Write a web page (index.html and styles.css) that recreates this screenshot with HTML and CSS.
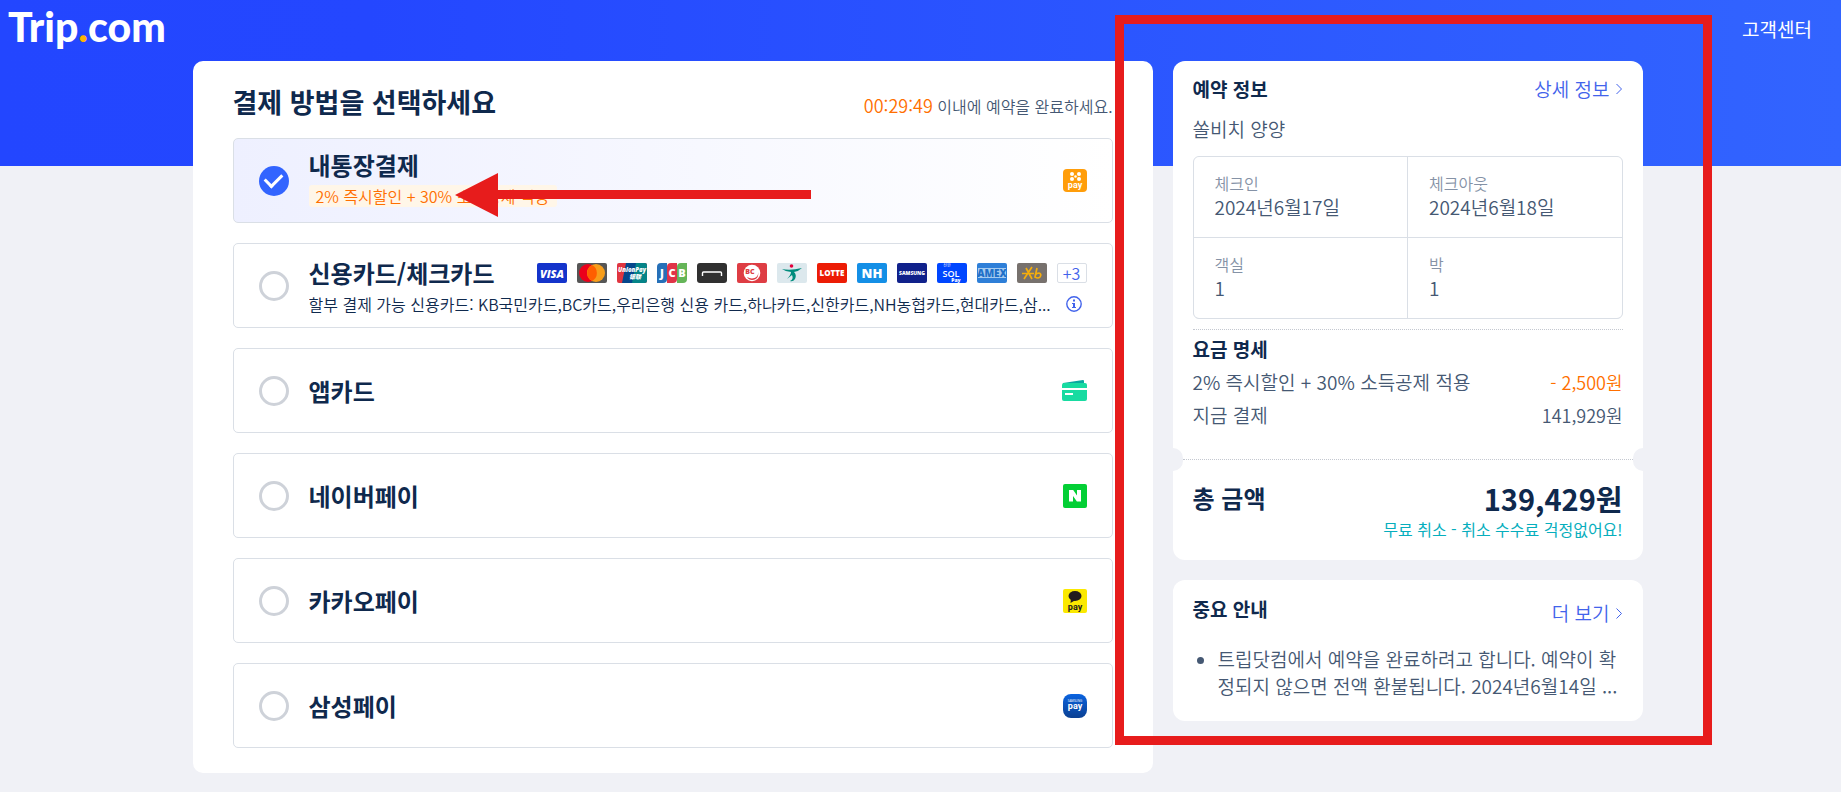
FILE: index.html
```html
<!DOCTYPE html>
<html lang="ko">
<head>
<meta charset="utf-8">
<meta name="viewport" content="width=device-width, initial-scale=1">
<title>Trip.com 결제</title>
<link rel="stylesheet" href="styles.css">
</head>
<body>
<header class="topbar">
  <a class="logo" href="#">Trip<span class="logo-dot">.</span>com</a>
  <a class="support" href="#">고객센터</a>
</header>

<div class="layout">
  <main class="panel payment">
    <div class="payment-head">
      <h1>결제 방법을 선택하세요</h1>
      <p class="timer"><time>00:29:49</time> 이내에 예약을 완료하세요.</p>
    </div>
    <div class="methods">
      <label class="method method-selected">
        <input type="radio" name="pay" checked>
        <span class="method-body">
          <span class="method-name">내통장결제</span>
          <span class="promo">2% 즉시할인 + 30% 소득공제 적용</span>
        </span>
        <svg class="brand" viewBox="0 0 24 24">
          <rect width="24" height="23" rx="4" fill="#ff9d0a"/>
          <g fill="#fff"><circle cx="9" cy="5" r="2"/><circle cx="16" cy="5" r="2"/><circle cx="9" cy="10" r="2"/><circle cx="16" cy="10" r="2"/><circle cx="12.500" cy="7.500" r="1.300"/></g>
          <text x="12" y="19" class="pay-text" fill="#fff">pay</text>
        </svg>
      </label>

      <label class="method">
        <input type="radio" name="pay">
        <span class="method-body">
          <span class="method-line">
            <span class="method-name">신용카드/체크카드</span>
            <span class="cards">
              <svg viewBox="0 0 30 20"><rect width="30" height="20" rx="2" fill="#1434cb"/><text x="15" y="15" class="mark visa">VISA</text></svg>
              <svg viewBox="0 0 30 20"><rect width="30" height="20" rx="2" fill="#565656"/><circle cx="11" cy="10" r="9" fill="#eb001b"/><circle cx="19" cy="10" r="9" fill="#f79e1b"/><path d="M15 2a9 9 0 0 1 0 16 9 9 0 0 1 0-16z" fill="#ff5f00"/></svg>
              <svg viewBox="0 0 30 20"><rect width="30" height="20" rx="2" fill="#e03540"/><path d="M9 0h15l-4 20H5z" fill="#06478c"/><path d="M19 0h9a2 2 0 0 1 2 2v16a2 2 0 0 1-2 2H15z" fill="#058488"/><text x="15" y="9" class="mark union">UnionPay</text><text x="18" y="16" class="mark union">银联</text></svg>
              <svg viewBox="0 0 30 20"><path d="M4 0h6v16a4 4 0 0 1-4 4H0V4a4 4 0 0 1 4-4z" fill="#2670b8"/><path d="M14 0h6v16a4 4 0 0 1-4 4h-6V4a4 4 0 0 1 4-4z" fill="#e03448"/><path d="M24 0h6v16a4 4 0 0 1-4 4h-6V4a4 4 0 0 1 4-4z" fill="#65b558"/><text class="mark jcb" y="14"><tspan x="5">J</tspan><tspan x="15">C</tspan><tspan x="25">B</tspan></text></svg>
              <svg viewBox="0 0 30 20"><rect width="30" height="20" rx="3" fill="#303030"/><path d="M5.500 13v-3q0-1 1-1h17q1 0 1 1v3" fill="none" stroke="#fff" stroke-width="1.400"/></svg>
              <svg viewBox="0 0 30 20"><rect width="30" height="20" rx="2" fill="#de3d44"/><circle cx="15" cy="10" r="8.300" fill="#fff"/><path d="M15 17c5 0 7-4 6-8 1 6-6 8-11 5 1 2 3 3 5 3z" fill="#de3d44"/><text x="13" y="11" class="mark bc">BC</text></svg>
              <svg viewBox="0 0 30 20"><rect width="30" height="20" rx="2" fill="#dce8ed"/><circle cx="14.500" cy="3" r="1.800" fill="#e5003c"/><path d="M5 6q8 2 20-1-3 3-8 4 3 3 1 7-2 3-5 2 4-2 2-6l-5 4q4-4 4-7-5 0-9-3z" fill="#008c7d"/></svg>
              <svg viewBox="0 0 30 20"><rect width="30" height="20" rx="2" fill="#ec1c05"/><text x="15" y="13" class="mark lotte">LOTTE</text></svg>
              <svg viewBox="0 0 30 20"><rect width="30" height="20" rx="2" fill="#148fe6"/><text x="15" y="15" class="mark nh">NH</text></svg>
              <svg viewBox="0 0 30 20"><rect width="30" height="20" rx="2" fill="#10218b"/><text x="15" y="12" class="mark samsung">SAMSUNG</text></svg>
              <svg viewBox="0 0 30 20"><rect width="30" height="20" rx="2" fill="#0046ff"/><text x="10" y="4" class="mark tiny">신한</text><text x="14" y="14" class="mark sol">SOL</text><text x="19" y="19" class="mark solpay">Pay</text></svg>
              <svg viewBox="0 0 30 20"><rect width="30" height="20" rx="2" fill="#2e7fd8"/><rect x="1" y="5" width="28" height="10" fill="#a5cbf0"/><text x="15" y="14" class="mark amex">AMEX</text></svg>
              <svg viewBox="0 0 30 20"><rect width="30" height="20" rx="2" fill="#77716d"/><path d="M5 10.500h12M9 5l6 11M15 4L7 16M20 5l-2 9q3 2 5 0 2-3-1-4-2 0-4 2" fill="none" stroke="#f6ae0b" stroke-width="1.700"/></svg>
              <span class="more-cards">+3</span>
            </span>
          </span>
          <span class="method-line">
            <span class="installment">할부 결제 가능 신용카드: KB국민카드,BC카드,우리은행 신용 카드,하나카드,신한카드,NH농협카드,현대카드,삼...</span>
            <button class="info" type="button" aria-label="할부 안내"><svg viewBox="0 0 18 18"><circle cx="9" cy="9" r="7.200" fill="none" stroke="#4263eb" stroke-width="1.400"/><path d="M8 4.500h2v2H8zM7 8h3v4h1v1H7v-1h1V9H7z" fill="#4263eb"/></svg></button>
          </span>
        </span>
      </label>

      <label class="method">
        <input type="radio" name="pay">
        <span class="method-body"><span class="method-name">앱카드</span></span>
        <svg class="brand brand-wide" viewBox="0 0 25 24"><path d="M1 4l20-3q1 0 1 1v3H1z" fill="#0aa89f"/><rect y="4" width="25" height="18" rx="2" fill="#18dba1"/><path d="M0 9h25v2H0zM3 14h8v2H3z" fill="#fff"/></svg>
      </label>

      <label class="method">
        <input type="radio" name="pay">
        <span class="method-body"><span class="method-name">네이버페이</span></span>
        <svg class="brand" viewBox="0 0 24 24"><rect width="24" height="24" rx="2" fill="#03cf35"/><path d="M6 6h4.200l3.800 5.500V6h4v11.500h-4.100L10 12v5.500H6z" fill="#fff"/></svg>
      </label>

      <label class="method">
        <input type="radio" name="pay">
        <span class="method-body"><span class="method-name">카카오페이</span></span>
        <svg class="brand" viewBox="0 0 24 24"><rect width="24" height="24" rx="2" fill="#fbe900"/><ellipse cx="12" cy="7" rx="6.500" ry="5" fill="#231c1d"/><path d="M8 9l-.500 5 5-3z" fill="#231c1d"/><text x="12" y="21" class="pay-text" fill="#231c1d">pay</text></svg>
      </label>

      <label class="method">
        <input type="radio" name="pay">
        <span class="method-body"><span class="method-name">삼성페이</span></span>
        <svg class="brand" viewBox="0 0 24 24"><defs><linearGradient id="spay" x1="0" y1="0" x2="0" y2="1"><stop offset="0" stop-color="#0a63e0"/><stop offset="1" stop-color="#0b4092"/></linearGradient></defs><rect width="24" height="24" rx="8" fill="url(#spay)"/><text x="12" y="8" class="mark spay-brand">SAMSUNG</text><text x="12" y="15" class="pay-text" fill="#fff">pay</text></svg>
      </label>
    </div>
  </main>

  <aside class="side">
    <section class="panel summary">
      <div class="summary-main">
        <div class="section-head">
          <h2>예약 정보</h2>
          <a class="link" href="#">상세 정보<svg class="chev" viewBox="0 0 8 12"><path d="M1.500 1l5 5-5 5"/></svg></a>
        </div>
        <p class="hotel">쏠비치 양양</p>
        <dl class="stay">
          <div><dt>체크인</dt><dd>2024년6월17일</dd></div>
          <div><dt>체크아웃</dt><dd>2024년6월18일</dd></div>
          <div><dt>객실</dt><dd>1</dd></div>
          <div><dt>박</dt><dd>1</dd></div>
        </dl>
        <div class="fees">
          <h2>요금 명세</h2>
          <p class="fee"><span>2% 즉시할인 + 30% 소득공제 적용</span><span class="fee-value discount">- 2,500원</span></p>
          <p class="fee"><span>지금 결제</span><span class="fee-value">141,929원</span></p>
        </div>
      </div>
      <div class="tear"></div>
      <div class="total">
        <div class="total-line"><strong class="total-label">총 금액</strong><strong class="total-price">139,429원</strong></div>
        <p class="free-cancel">무료 취소 - 취소 수수료 걱정없어요!</p>
      </div>
    </section>

    <section class="panel notice">
      <div class="section-head">
        <h2>중요 안내</h2>
        <a class="link link-more" href="#">더 보기<svg class="chev chev-large" viewBox="0 0 8 12"><path d="M1.500 1l5 5-5 5"/></svg></a>
      </div>
      <ul>
        <li>트립닷컴에서 예약을 완료하려고 합니다. 예약이 확<br>정되지 않으면 전액 환불됩니다. 2024년6월14일 ...</li>
      </ul>
    </section>
    <div class="highlight"></div>
  </aside>
  <svg class="arrow" viewBox="0 0 356 44"><path d="M0 22L43 0v17h313v9H43v18z" fill="#e71c1c"/></svg>
</div>
</body>
</html>
```
FILE: styles.css
```css
* { box-sizing: border-box; }
html { background: #f0f1f6; }
body {
  margin: 0;
  min-height: 100vh;
  background: #f0f1f6 linear-gradient(90deg, #2346ff 0%, #2447ff 20%, #3264ff 100%) 0 0 / 100% 166px no-repeat;
  color: #455873;
  font-family: "Noto Sans CJK KR", "Noto Sans", sans-serif;
  font-weight: 350;
  font-size: 19px;
  line-height: 24px;
}
h1, h2, p, dl, dd, ul { margin: 0; }
h1, h2 { color: #0f294d; font-weight: 700; }
h2 { font-size: 19px; line-height: 24px; }
a { color: inherit; text-decoration: none; }
svg { display: block; flex: none; }

.topbar {
  display: flex;
  justify-content: space-between;
  align-items: center;
  height: 61px;
  padding: 0 29px 3px 8px;
  color: #fff;
}
.logo {
  padding-bottom: 4px;
  font: 900 41px/48px Lato, sans-serif;
}
.logo-dot { color: #ffb400; }
.support { font-weight: 400; }

.layout {
  position: relative;
  display: grid;
  grid-template-columns: minmax(0, 960fr) minmax(0, 470fr);
  align-items: start;
  gap: 20px;
  max-width: 1450px;
  margin: 0 auto;
  right: 3px;
}
.panel { background: #fff; border-radius: 12px; }

.payment { padding: 25px 40px; border-radius: 10px; }
.payment-head {
  display: flex;
  justify-content: space-between;
  align-items: baseline;
  margin-bottom: 20px;
}
h1 { font-size: 27px; line-height: 32px; }
.timer { font-size: 16px; }
.timer time { color: #ff6f00; font-size: 18px; }

.methods { display: grid; gap: 20px; }
.method {
  display: flex;
  align-items: center;
  gap: 20px;
  min-height: 85px;
  padding: 0 25px;
  border: 1px solid #dadfe6;
  border-radius: 5px;
}
.method-selected { background: linear-gradient(90deg, #eef0ff, #fff); }
.method input {
  appearance: none;
  flex: none;
  width: 30px;
  height: 30px;
  margin: 0;
  border: 3px solid #ced2d9;
  border-radius: 50%;
}
.method input:checked {
  display: grid;
  place-items: center;
  border: 0;
  background: #3264ff;
}
.method input:checked::before {
  content: "";
  width: 14px;
  height: 8px;
  margin-bottom: 4px;
  border: solid #fff;
  border-width: 0 0 3px 3px;
  transform: rotate(-45deg);
}
.method-body {
  display: flex;
  flex: 1;
  flex-direction: column;
  align-items: flex-start;
  gap: 4px;
  min-width: 0;
}
.method-selected .method-body { padding-bottom: 6px; }
.method-name {
  color: #0f294d;
  font-size: 24px;
  font-weight: 700;
  line-height: 32px;
  white-space: nowrap;
}
.promo {
  padding: 0 7px;
  border-radius: 3px;
  background: #fff6e8;
  color: #ff6f00;
  font-size: 16px;
  line-height: 22px;
}
.method-line {
  display: flex;
  justify-content: space-between;
  align-items: center;
  width: 100%;
}
.cards { display: flex; gap: 10px; }
.cards svg, .more-cards { width: 30px; height: 20px; }
.more-cards {
  border: 1px solid #dadfe6;
  border-radius: 2px;
  color: #4263eb;
  font-size: 16px;
  line-height: 18px;
  text-align: center;
}
.installment {
  overflow: hidden;
  color: #0f294d;
  font-size: 16px;
  line-height: 22px;
  white-space: nowrap;
}
.info {
  width: 18px;
  height: 18px;
  margin-right: 4px;
  padding: 0;
  border: 0;
  background: none;
}
.brand { width: 24px; height: 24px; }
.brand-wide { width: 25px; }

.mark { fill: #fff; font-family: "Open Sans", sans-serif; font-weight: 800; text-anchor: middle; }
.pay-text { font: 700 9px Roboto, sans-serif; text-anchor: middle; }
.visa { font-size: 11px; font-style: italic; }
.union { font-size: 6px; font-style: italic; font-family: "Open Sans", "Noto Sans CJK SC", sans-serif; }
.jcb { font-size: 11px; }
.bc { fill: #de3d44; font-size: 7px; }
.lotte { font-size: 8px; }
.nh { font-size: 13px; }
.samsung { font-size: 5px; }
.tiny { font: 400 4px "Noto Sans CJK KR", sans-serif; }
.sol { font-size: 9px; font-weight: 600; }
.solpay { font-size: 5px; }
.amex { fill: #2170c8; font-size: 10px; }
.spay-brand { font-size: 3px; font-weight: 400; }

.side { position: relative; display: grid; gap: 20px; }
.summary { overflow: hidden; }
.summary-main { padding: 16px 20px 0; }
.section-head { display: flex; justify-content: space-between; align-items: flex-start; }
.link { display: flex; align-items: center; gap: 5px; color: #4263eb; }
.chev {
  width: 8px;
  height: 12px;
  fill: none;
  stroke: currentColor;
  stroke-width: 1;
}
.chev-large { height: 15px; }
.hotel { margin: 16px 0 15px; }
.stay {
  display: grid;
  grid-template-columns: 1fr 1fr;
  gap: 1px;
  overflow: hidden;
  border: 1px solid #dadfe6;
  border-radius: 6px;
  background: #dadfe6;
}
.stay div { height: 80px; padding: 14px 21px; background: #fff; }
dt { color: #8592a6; font-size: 16px; line-height: 24px; }
.fees { margin-top: 10px; padding: 7px 0 32px; border-top: 1px dotted #c4c8d0; }
.fee { display: flex; justify-content: space-between; margin-top: 9px; }
.fee-value { font-size: 18px; }
.discount { color: #ff6f00; }
.tear {
  position: relative;
  margin: 0 10px;
  border-top: 1px dotted #c4c8d0;
}
.tear::before, .tear::after {
  content: "";
  position: absolute;
  top: -12px;
  width: 20px;
  height: 23px;
  border-radius: 10px;
  background: #f0f1f6;
}
.tear::before { left: -20px; }
.tear::after { right: -20px; }
.total { padding: 18px 20px 20px; }
.total-line { display: flex; justify-content: space-between; align-items: flex-start; color: #0f294d; }
.total-label { font-size: 24px; font-weight: 700; line-height: 40px; }
.total-price { font-size: 29px; font-weight: 700; line-height: 40px; }
.free-cancel { color: #06aebd; font-size: 16px; font-weight: 400; line-height: 22px; text-align: right; }

.notice { padding: 17px 20px 22px; }
.link-more { padding-top: 4px; }
.notice ul { margin-top: 20px; padding-left: 25px; line-height: 27px; }
.notice li { white-space: nowrap; }

.highlight {
  position: absolute;
  z-index: 1;
  top: -46px;
  right: -69px;
  bottom: -24px;
  left: -58px;
  border: 9px solid #e71c1c;
  pointer-events: none;
}
.arrow { position: absolute; top: 112px; left: 262px; width: 356px; height: 44px; pointer-events: none; }
```
